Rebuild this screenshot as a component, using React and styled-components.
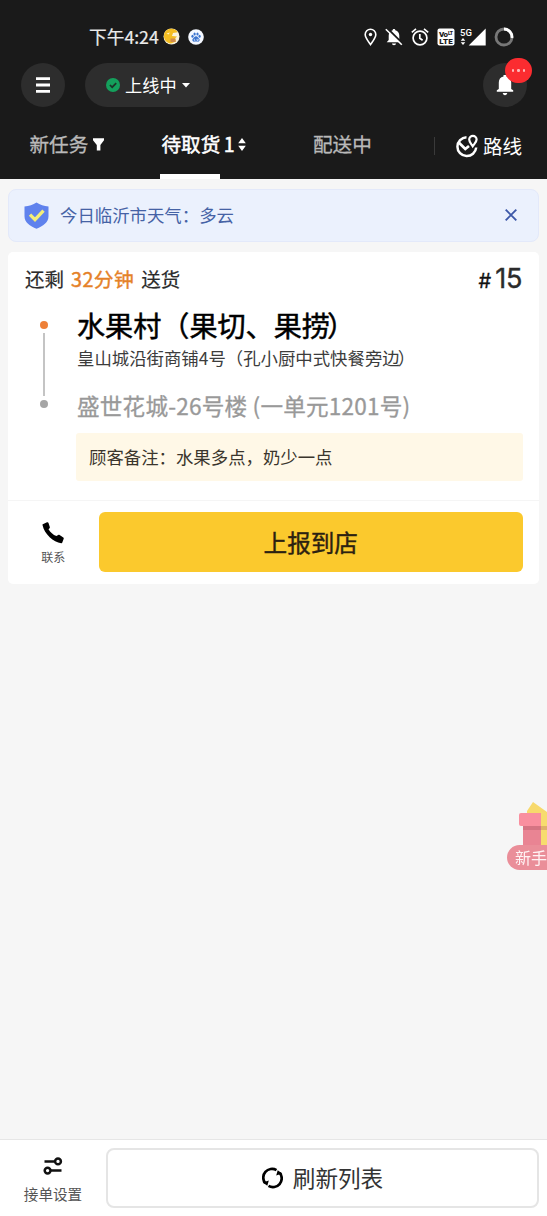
import React from 'react';
import styled, { createGlobalStyle } from 'styled-components';

const GlobalStyle=createGlobalStyle`
    * {
        box-sizing: border-box;
    }
    body {
        margin: 0;
        background: #f6f6f6;
        font-family: "Noto Sans CJK SC", "Noto Sans", sans-serif;
    }
    svg {
        display: block;
        flex: none;
    }
    button {
        font-family: inherit;
        border: none;
        padding: 0;
        color: inherit;
    }
`;

const Container=styled.div`
    display: flex;
    flex-direction: column;
    width: 547px;
    height: 1216px;
    overflow: hidden;
    background: #f6f6f6;
`;
const Text=styled.span`
    display: block;
    white-space: pre;
    line-height: 1.2;
    font-size: ${p=>p.$size}px;
    color: ${p=>p.$color || 'inherit'};
    letter-spacing: ${p=>p.$spacing || 0}px;
    -webkit-text-stroke: ${p=>p.$stroke || 0}px currentColor;
`;
// pulls a closing full-width bracket towards the character before it
const Tight=styled.span`
    letter-spacing: ${p=>-p.$by}px;
`;
const Header=styled.header`
    height: 179px;
    flex: none;
    background: #1a1a1a;
    color: #fff;
`;
const StatusBar=styled.div`
    display: flex;
    align-items: center;
    justify-content: space-between;
    height: 63px;
    padding: 11px 33px 0 89px;
`;
const StatusGroup=styled.div`
    display: flex;
    align-items: center;
    gap: ${p=>p.$gap}px;
`;
const Toolbar=styled.div`
    display: flex;
    align-items: center;
    height: 44px;
    padding: 0 20px 0 21px;
`;
const RoundButton=styled.button`
    position: relative;
    display: flex;
    align-items: center;
    justify-content: center;
    width: 44px;
    height: 44px;
    border-radius: 50%;
    background: #2d2d2d;
`;
const OnlinePill=styled.button`
    display: flex;
    align-items: center;
    width: 124px;
    height: 44px;
    margin: 0 auto 0 20px;
    padding-left: 21px;
    gap: 5px;
    border-radius: 22px;
    background: #2d2d2d;
`;
const Badge=styled.span`
    position: absolute;
    top: -5px;
    left: 22px;
    display: flex;
    align-items: center;
    justify-content: center;
    gap: 3px;
    width: 27px;
    height: 25px;
    border-radius: 13px;
    background: #fb2c30;
`;
const BadgeDot=styled.i`
    width: 2.5px;
    height: 2.5px;
    border-radius: 50%;
    background: #ffb9b9;
`;
const Tabs=styled.nav`
    display: grid;
    grid-template-columns: 160px 153px 121px 1fr;
    height: 72px;
`;
const Tab=styled.div`
    position: relative;
    display: flex;
    align-items: center;
    height: 72px;
    padding: ${p=>p.$drop || 2}px 0 0 ${p=>p.$left || 0}px;
    gap: ${p=>p.$gap || 0}px;
    color: ${p=>p.$active ? '#fff' : '#b9b9b9'};
`;
const Underline=styled.i`
    position: absolute;
    left: 0;
    bottom: 0;
    width: 60px;
    height: 5px;
    background: #fff;
`;
const RouteDivider=styled.i`
    width: 1px;
    height: 18px;
    background: #3a3a3a;
`;
const Main=styled.main`
    flex: 1;
    padding: 10px 8px 0;
`;
const Notice=styled.div`
    display: flex;
    align-items: center;
    height: 53px;
    padding: 0 21px 1px 15px;
    gap: 11px;
    border: 1px solid #e3e9fa;
    border-radius: 8px;
    background: #ebf1fd;
`;
const CloseButton=styled.button`
    margin-left: auto;
    background: none;
`;
const Card=styled.section`
    margin-top: 10px;
    height: 332px;
    border-radius: 5px;
    background: #fff;
`;
const CardHead=styled.div`
    display: flex;
    align-items: center;
    height: 55px;
    padding: 0 17px 1px;
    gap: 7px;
`;
const OrderNumber=styled.div`
    display: flex;
    align-items: baseline;
    gap: 4px;
    margin-left: auto;
    font-family: Inter, sans-serif;
`;
const Stops=styled.div`
    display: grid;
    grid-template-columns: 69px 1fr;
    height: 126px;
`;
const Rail=styled.div`
    display: flex;
    flex-direction: column;
    align-items: center;
    width: 16px;
    margin-left: 28px;
    padding-top: 14px;
    gap: 4px;
`;
const Dot=styled.i`
    width: 8px;
    height: 8px;
    border-radius: 50%;
    background: ${p=>p.$color};
`;
const Line=styled.i`
    width: 2px;
    height: 63px;
    background: #c4c4c4;
`;
const Places=styled.div`
    display: flex;
    flex-direction: column;
`;
const Place=styled.div`
    display: flex;
    align-items: center;
    height: ${p=>p.$height}px;
    margin-top: ${p=>p.$top || 0}px;
`;
const Note=styled.div`
    display: flex;
    align-items: center;
    height: 48px;
    margin: 0 16px 0 68px;
    padding-left: 13px;
    border-radius: 3px;
    background: #fff8e7;
`;
const CardFoot=styled.div`
    display: flex;
    height: 84px;
    margin-top: 19px;
    padding: 11px 16px 12px 0;
    border-top: 1px solid #f5f5f5;
`;
const IconAction=styled.button`
    display: flex;
    flex-direction: column;
    align-items: center;
    width: ${p=>p.$width}px;
    flex: none;
    padding-top: ${p=>p.$top}px;
    gap: ${p=>p.$gap}px;
    background: none;
`;
const ReportButton=styled.button`
    display: flex;
    align-items: center;
    justify-content: center;
    flex: 1;
    height: 60px;
    border-radius: 6px;
    color: #2b2111;
    background: #fbc92d;
`;
const Gift=styled.aside`
    position: fixed;
    left: 507px;
    top: 802px;
    width: 40px;
    height: 70px;
    overflow: hidden;
`;
const GiftLabel=styled.div`
    position: absolute;
    top: 43px;
    left: 0;
    display: flex;
    align-items: center;
    width: 64px;
    height: 25px;
    padding-left: 8px;
    border-radius: 13px;
    color: #fff3f4;
    background: #ea8e99;
`;
const Footer=styled.footer`
    display: flex;
    height: 77px;
    flex: none;
    padding: 8px 8px 0 0;
    border-top: 1px solid #e6e6e6;
    background: #fff;
`;
const RefreshButton=styled.button`
    display: flex;
    align-items: center;
    justify-content: center;
    flex: 1;
    height: 60px;
    gap: 10px;
    border: 2px solid #e5e5e5;
    border-radius: 8px;
    background: #fff;
`;

const YellowAppIcon = () => (
    <svg width='17' height='17' viewBox='0 0 17 17'>
        <circle cx='8.5' cy='8.5' r='8' fill='#f8f2dc'/>
        <path d='M1 8C1 3 5 .6 8.500.8c3 0 5 1.400 6.200 3.400L10 5l-1 3 5 .5-2 2 1 3-5 2C3 15 .8 11 1 8z' fill='#f3bd22'/>
        <path d='M7.500 10.500h5v3.500h-5z' fill='#d08a4a'/>
        <path d='M3.500 5.500l3.500-1-1.500 2z' fill='#fff3c4'/>
    </svg>
)

const PawIcon = () => (
    <svg width='16' height='16' viewBox='0 0 16 16'>
        <circle cx='8' cy='8' r='7.8' fill='#f4f8ff'/>
        <g fill='#3973cf'>
            <ellipse cx='4.5' cy='7.3' rx='1.1' ry='1.5'/>
            <ellipse cx='6.6' cy='4.9' rx='1.1' ry='1.5'/>
            <ellipse cx='9.5' cy='4.9' rx='1.1' ry='1.5'/>
            <ellipse cx='11.6' cy='7.3' rx='1.1' ry='1.5'/>
            <path d='M8 7.200c1.500 0 1.800 1.300 3 2.400 1.300 1.200.6 3.200-.9 3.200-.8 0-1.300-.2-2.100-.2s-1.300.2-2.100.2c-1.500 0-2.200-2-.9-3.200C6.200 8.500 6.500 7.200 8 7.200z'/>
        </g>
        <path d='M6.300 9.800v1.600h1M9 9.800v1.600h1.200V9.800' stroke='#f4f8ff' strokeWidth='.7' fill='none'/>
    </svg>
)

const LocationIcon = () => (
    <svg width='13' height='18' viewBox='0 0 13 18' fill='none'>
        <path d='M6.500 16.500C4.500 13.500 1.200 10 1.200 6.500a5.300 5.300 0 0 1 10.600 0c0 3.500-3.300 7-5.300 10z' stroke='#fff' strokeWidth='1.600'/>
        <circle cx='6.500' cy='6.500' r='1.700' fill='#fff'/>
    </svg>
)

const MutedIcon = () => (
    <svg width='18' height='18' viewBox='0 0 18 18'>
        <path d='M9 1c1 0 1.300.7 1.300 1.300 2.600.6 4 2.700 4 5.200V12l2 2.300H1.700L3.700 12V7.500C3.700 4.900 5.200 2.900 7.700 2.300 7.700 1.500 8 1 9 1zM7 15.500h4c0 1-.9 1.700-2 1.700s-2-.7-2-1.700z' fill='#fff'/>
        <path d='M2 0l16 16' stroke='#1a1a1a' strokeWidth='2'/>
        <path d='M.8 1.200l16 15.500' stroke='#fff' strokeWidth='1.600'/>
    </svg>
)

const AlarmIcon = () => (
    <svg width='18' height='18' viewBox='0 0 18 18' fill='none' stroke='#fff' strokeWidth='1.700'>
        <circle cx='9' cy='10' r='6.900'/>
        <path d='M8.800 6v4.300l2.800 1.900M.8 4.300L5 .9M17.200 4.300L13 .9'/>
    </svg>
)

// VoLTE badge, 5G label with data arrows and the signal triangle
const NetworkIcon = () => (
    <svg width='49' height='18' viewBox='0 0 49 18'>
        <rect x='.5' y='.5' width='17' height='17' rx='2' fill='#fff'/>
        <g fontFamily='Roboto, sans-serif' fontWeight='900' fill='#1a1a1a'>
            <text x='2' y='8.500' fontSize='8' textLength='9'>Vo</text>
            <text x='11' y='6.500' fontSize='5' textLength='5'>LT</text>
            <text x='2.300' y='15.800' fontSize='8' textLength='13.500'>LTE</text>
        </g>
        <text x='23' y='7.500' fontFamily='Roboto, sans-serif' fontSize='9.500' fontWeight='500' fill='#fff' textLength='12'>5G</text>
        <path d='M26 10l2.300 2.800h-4.600zM26 17l2.300-2.800h-4.600z' fill='#fff'/>
        <path d='M48.700.5v17H31.700z' fill='#fff'/>
    </svg>
)

const BatteryIcon = () => (
    <svg width='20' height='20' viewBox='0 0 20 20' fill='none' strokeWidth='2.800'>
        <circle cx='10' cy='10' r='8' stroke='#777'/>
        <path d='M10 2A8 8 0 0 1 17.900 11' stroke='#fff'/>
    </svg>
)

const MenuIcon = () => (
    <svg width='14' height='16' viewBox='0 0 14 16' fill='#fff'>
        <path d='M0 .3h14v2.800H0zM0 6.600h14v2.800H0zM0 12.900h14v2.800H0z'/>
    </svg>
)

const CheckIcon = () => (
    <svg width='14' height='14' viewBox='0 0 14 14'>
        <circle cx='7' cy='7' r='7' fill='#14a05c'/>
        <path d='M3.900 7l2.300 2.200 4-4' stroke='#1c3328' strokeWidth='1.700' fill='none'/>
    </svg>
)

const BellIcon = () => (
    <svg width='18' height='21' viewBox='0 0 18 21' fill='#fff'>
        <path d='M7.500 0h3v1.600c3.200.6 4.700 3 4.700 6V14l2 1.200v1.600H.8v-1.600l2-1.200V7.600c0-3 1.500-5.400 4.700-6zM6.800 18h4.400c0 1.300-1 2.200-2.200 2.200S6.800 19.300 6.800 18z'/>
    </svg>
)

const FilterIcon = () => (
    <svg width='11' height='13' viewBox='0 0 11 13' fill='#fff'>
        <path d='M0 .3h11v2L7.400 7v5.500H3.800V7L0 2.300z'/>
    </svg>
)

const SortIcon = () => (
    <svg width='8' height='13' viewBox='0 0 8 13' fill='#fff'>
        <path d='M4 0l3.800 5.200H.2zM4 13L.2 7.800h7.600z'/>
    </svg>
)

const RouteIcon = () => (
    <svg width='23' height='24' viewBox='0 0 23 24' fill='none' stroke='#fff' strokeWidth='2.500'>
        <path d='M10.500 3.300A9.400 9.400 0 1 0 20.200 13.500'/>
        <path d='M3 8.700l6.300 6.300L13 12' strokeWidth='2.700'/>
        <path d='M16.700 12.200c-1.300-2.200-3.500-4-3.500-6.600a3.700 3.700 0 0 1 7.400 0c0 2.600-2.600 4.400-3.900 6.600z' strokeWidth='2.200'/>
    </svg>
)

const ShieldIcon = () => (
    <svg width='25' height='27' viewBox='0 0 25 27'>
        <path d='M12.500.4c3.500 2.400 7.500 3.700 12 4v9.800c0 6.300-5.500 9.700-12 12.500C6 23.900.5 20.500.5 14.200V4.400c4.500-.3 8.500-1.600 12-4z' fill='#5f82ed'/>
        <path d='M6 12.700l5 5 8.500-9' stroke='#f4ee78' strokeWidth='3.300' fill='none'/>
    </svg>
)

const CloseIcon = () => (
    <svg width='12' height='12' viewBox='0 0 12 12'>
        <path d='M.7.7l10.600 10.600M11.300.7L.7 11.300' stroke='#3d58a8' strokeWidth='1.900'/>
    </svg>
)

const PhoneIcon = () => (
    <svg width='22' height='22' viewBox='0 0 22 22'>
        <path d='M.8 2.300L5 .2c.8-.2 1.200 0 1.500.7l1.300 4c.2.700 0 1-.5 1.500L6.500 7.300c1.900 3.200 4.500 5.500 7.900 6.800l1.800-1.200c.5-.3.900-.3 1.400 0l3.700 2.500c.5.400.6.800.4 1.400l-1.500 4c-.2.400-.5.500-1 .4C11.500 20 2.500 12.500.5 3c-.1-.4 0-.5.3-.7z' fill='#000'/>
    </svg>
)

const SettingsIcon = () => (
    <svg width='20' height='18' viewBox='0 0 20 18' fill='none' stroke='#111' strokeWidth='2.500'>
        <path d='M1.500 4.400h10M8 13.600h10.500'/>
        <circle cx='15' cy='4.400' r='2.900'/>
        <circle cx='4.600' cy='13.600' r='2.900'/>
    </svg>
)

const RefreshIcon = () => (
    <svg width='21' height='22' viewBox='0 0 21 22' fill='none' stroke='#000' strokeWidth='2.700'>
        <path d='M3.200 16.200A8.800 8.800 0 0 1 14.500 3.100M17.800 5.800A8.800 8.800 0 0 1 6.500 18.900'/>
        <path d='M.8 15.400l6-2-1.500 5.400zM20.200 6.600l-6 2 1.500-5.400z' fill='#000' stroke='none'/>
    </svg>
)

const GiftIcon = () => (
    <svg width='40' height='44' viewBox='0 0 40 44'>
        <path d='M20 9L26 0l14 10v6H20z' fill='#f7d96c'/>
        <path d='M16 22h24v22H16z' fill='#e98493'/>
        <path d='M14 11h26v13H14a2 2 0 0 1-2-2v-9a2 2 0 0 1 2-2z' fill='#f98f9f'/>
        <path d='M34 10h6v34h-6z' fill='#f7dc6e'/>
        <path d='M16 24h24v4H16z' fill='#a8505f' opacity='.3'/>
    </svg>
)

const App = () => {
    return (
        <Container>
            <GlobalStyle/>
            <Header>
                <StatusBar>
                    <StatusGroup $gap={8}>
                        <StatusGroup $gap={4}>
                            <Text $size={17.7} $color='#ececec' $stroke={0.2}>下午4:24</Text>
                            <YellowAppIcon/>
                        </StatusGroup>
                        <PawIcon/>
                    </StatusGroup>
                    <StatusGroup $gap={8}>
                        <LocationIcon/>
                        <MutedIcon/>
                        <AlarmIcon/>
                        <NetworkIcon/>
                        <BatteryIcon/>
                    </StatusGroup>
                </StatusBar>
                <Toolbar>
                    <RoundButton><MenuIcon/></RoundButton>
                    <OnlinePill>
                        <CheckIcon/>
                        <Text $size={17.2} $color='#fff'>上线中</Text>
                        <svg width='8' height='5' viewBox='0 0 8 5'><path d='M0 0h8L4 4.500z' fill='#fff'/></svg>
                    </OnlinePill>
                    <RoundButton>
                        <BellIcon/>
                        <Badge><BadgeDot/><BadgeDot/><BadgeDot/></Badge>
                    </RoundButton>
                </Toolbar>
                <Tabs>
                    <Tab $left={29.5} $gap={5}>
                        <Text $size={19.6} $stroke={0.3}>新任务</Text>
                        <FilterIcon/>
                    </Tab>
                    <Tab $left={1.5} $gap={3} $active>
                        <Text $size={19.6} $stroke={0.5}>待取货<Tight $by={1}> </Tight>1</Text>
                        <SortIcon/>
                        <Underline/>
                    </Tab>
                    <Tab><Text $size={19.6} $stroke={0.3}>配送中</Text></Tab>
                    <Tab $gap={20.5} $drop={5} $active>
                        <RouteDivider/>
                        <StatusGroup $gap={4.5}>
                            <RouteIcon/>
                            <Text $size={19.6}>路线</Text>
                        </StatusGroup>
                    </Tab>
                </Tabs>
            </Header>
            <Main>
                <Notice>
                    <ShieldIcon/>
                    <Text $size={17.4} $color='#4562a5'>今日临沂市天气：多云</Text>
                    <CloseButton><CloseIcon/></CloseButton>
                </Notice>
                <Card>
                    <CardHead>
                        <Text $size={19.5} $color='#2b2b2b' $stroke={0.2}>还剩</Text>
                        <Text $size={19.8} $spacing={0.4} $color='#e58128' $stroke={0.4}>32分钟</Text>
                        <Text $size={19.5} $color='#2b2b2b' $stroke={0.2}>送货</Text>
                        <OrderNumber>
                            <Text $size={20} $color='#111' $stroke={0.3}>#</Text>
                            <Text $size={27} $spacing={-0.3} $color='#2b2b2b' $stroke={0.4}>15</Text>
                        </OrderNumber>
                    </CardHead>
                    <Stops>
                        <Rail>
                            <Dot $color='#ee8038'/>
                            <Line/>
                            <Dot $color='#a5a5a5'/>
                        </Rail>
                        <Places>
                            <Place $height={36}><Text $size={28.1} $color='#000' $stroke={0.5}>水果村（果切、果<Tight $by={3}>捞</Tight>）</Text></Place>
                            <Place $height={31}><Text $size={17.4} $color='#3c3c3c'>皇山城沿街商铺4号（孔小厨中式快餐旁<Tight $by={2}>边</Tight>）</Text></Place>
                            <Place $height={34} $top={15}><Text $size={22.6} $spacing={0.2} $color='#999' $stroke={0.3}>盛世花城-26号楼 (一单元1201号)</Text></Place>
                        </Places>
                    </Stops>
                    <Note><Text $size={17.4} $color='#3a352c'>顾客备注：水果多点，奶少一点</Text></Note>
                    <CardFoot>
                        <IconAction $width={90.5} $top={10} $gap={6}>
                            <PhoneIcon/>
                            <Text $size={12} $color='#555'>联系</Text>
                        </IconAction>
                        <ReportButton><Text $size={23.6} $stroke={0.4}>上报到店</Text></ReportButton>
                    </CardFoot>
                </Card>
            </Main>
            <Gift>
                <GiftIcon/>
                <GiftLabel><Text $size={16}>新手</Text></GiftLabel>
            </Gift>
            <Footer>
                <IconAction $width={106} $top={9} $gap={10}>
                    <SettingsIcon/>
                    <Text $size={14.6} $color='#555'>接单设置</Text>
                </IconAction>
                <RefreshButton>
                    <RefreshIcon/>
                    <Text $size={22.6} $color='#333'>刷新列表</Text>
                </RefreshButton>
            </Footer>
        </Container>
    )
}

export default App
